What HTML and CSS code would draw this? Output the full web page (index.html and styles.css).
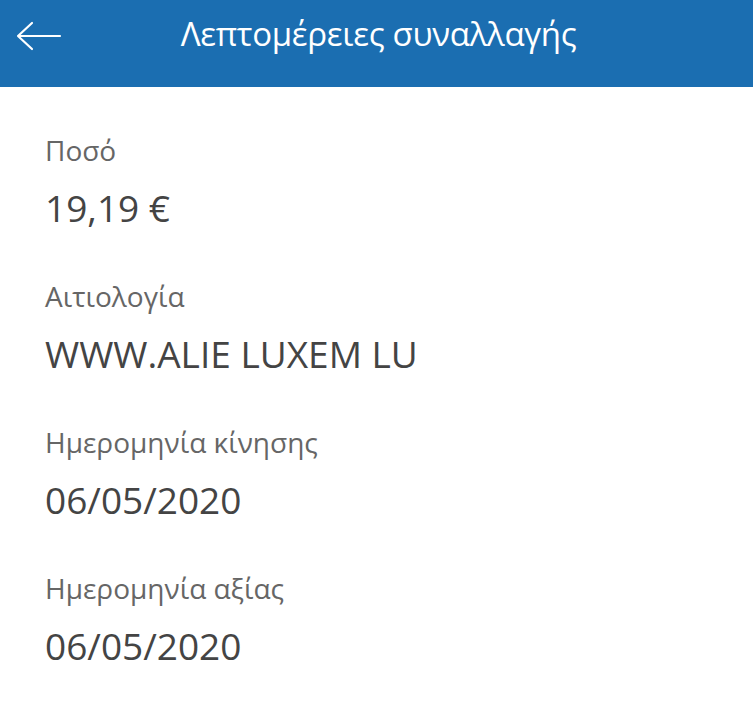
FILE: index.html
```html
<!DOCTYPE html>
<html lang="el">
<head>
<meta charset="utf-8">
<link rel="stylesheet" href="styles.css">
</head>
<body>
<header class="topbar">
  <button class="back" aria-label="Πίσω">
    <svg width="50" height="32" viewBox="0 0 50 32"><path d="M19 3 L5 16 L19 29 M5 16 H47" fill="none" stroke="#fff" stroke-width="2.2" stroke-linecap="round" stroke-linejoin="round"/></svg>
  </button>
  <h1 class="title">Λεπτομέρειες συναλλαγής</h1>
</header>
<main class="details">
  <div class="item">
    <div class="label">Ποσό</div>
    <div class="value">19,19 €</div>
  </div>
  <div class="item">
    <div class="label">Αιτιολογία</div>
    <div class="value">WWW.ALIE LUXEM LU</div>
  </div>
  <div class="item">
    <div class="label">Ημερομηνία κίνησης</div>
    <div class="value">06/05/2020</div>
  </div>
  <div class="item">
    <div class="label">Ημερομηνία αξίας</div>
    <div class="value">06/05/2020</div>
  </div>
</main>
</body>
</html>
```
FILE: styles.css
```css
* { box-sizing: border-box; }
html, body { margin: 0; padding: 0; background: #fff; }
body { font-family: "Open Sans", "Noto Sans", sans-serif; }
.topbar {
  position: relative;
  height: 87px;
  background: #1b6eb1;
  display: flex;
  align-items: center;
  justify-content: center;
}
.back {
  position: absolute;
  left: 13px;
  top: 20px;
  padding: 0;
  border: 0;
  background: none;
  display: flex;
}
.title {
  margin: 0 0 20px 4px;
  font-weight: 400;
  font-size: 33px;
  color: #fff;
  letter-spacing: -0.3px;
}
.details {
  padding: 45px 0 0 45px;
  display: flex;
  flex-direction: column;
}
.item {
  height: 146px;
}
.label {
  font-size: 28px;
  line-height: 36px;
  color: #666;
}
.value {
  margin-top: 18px;
  font-size: 37px;
  line-height: 44px;
  color: #444;
}
```
